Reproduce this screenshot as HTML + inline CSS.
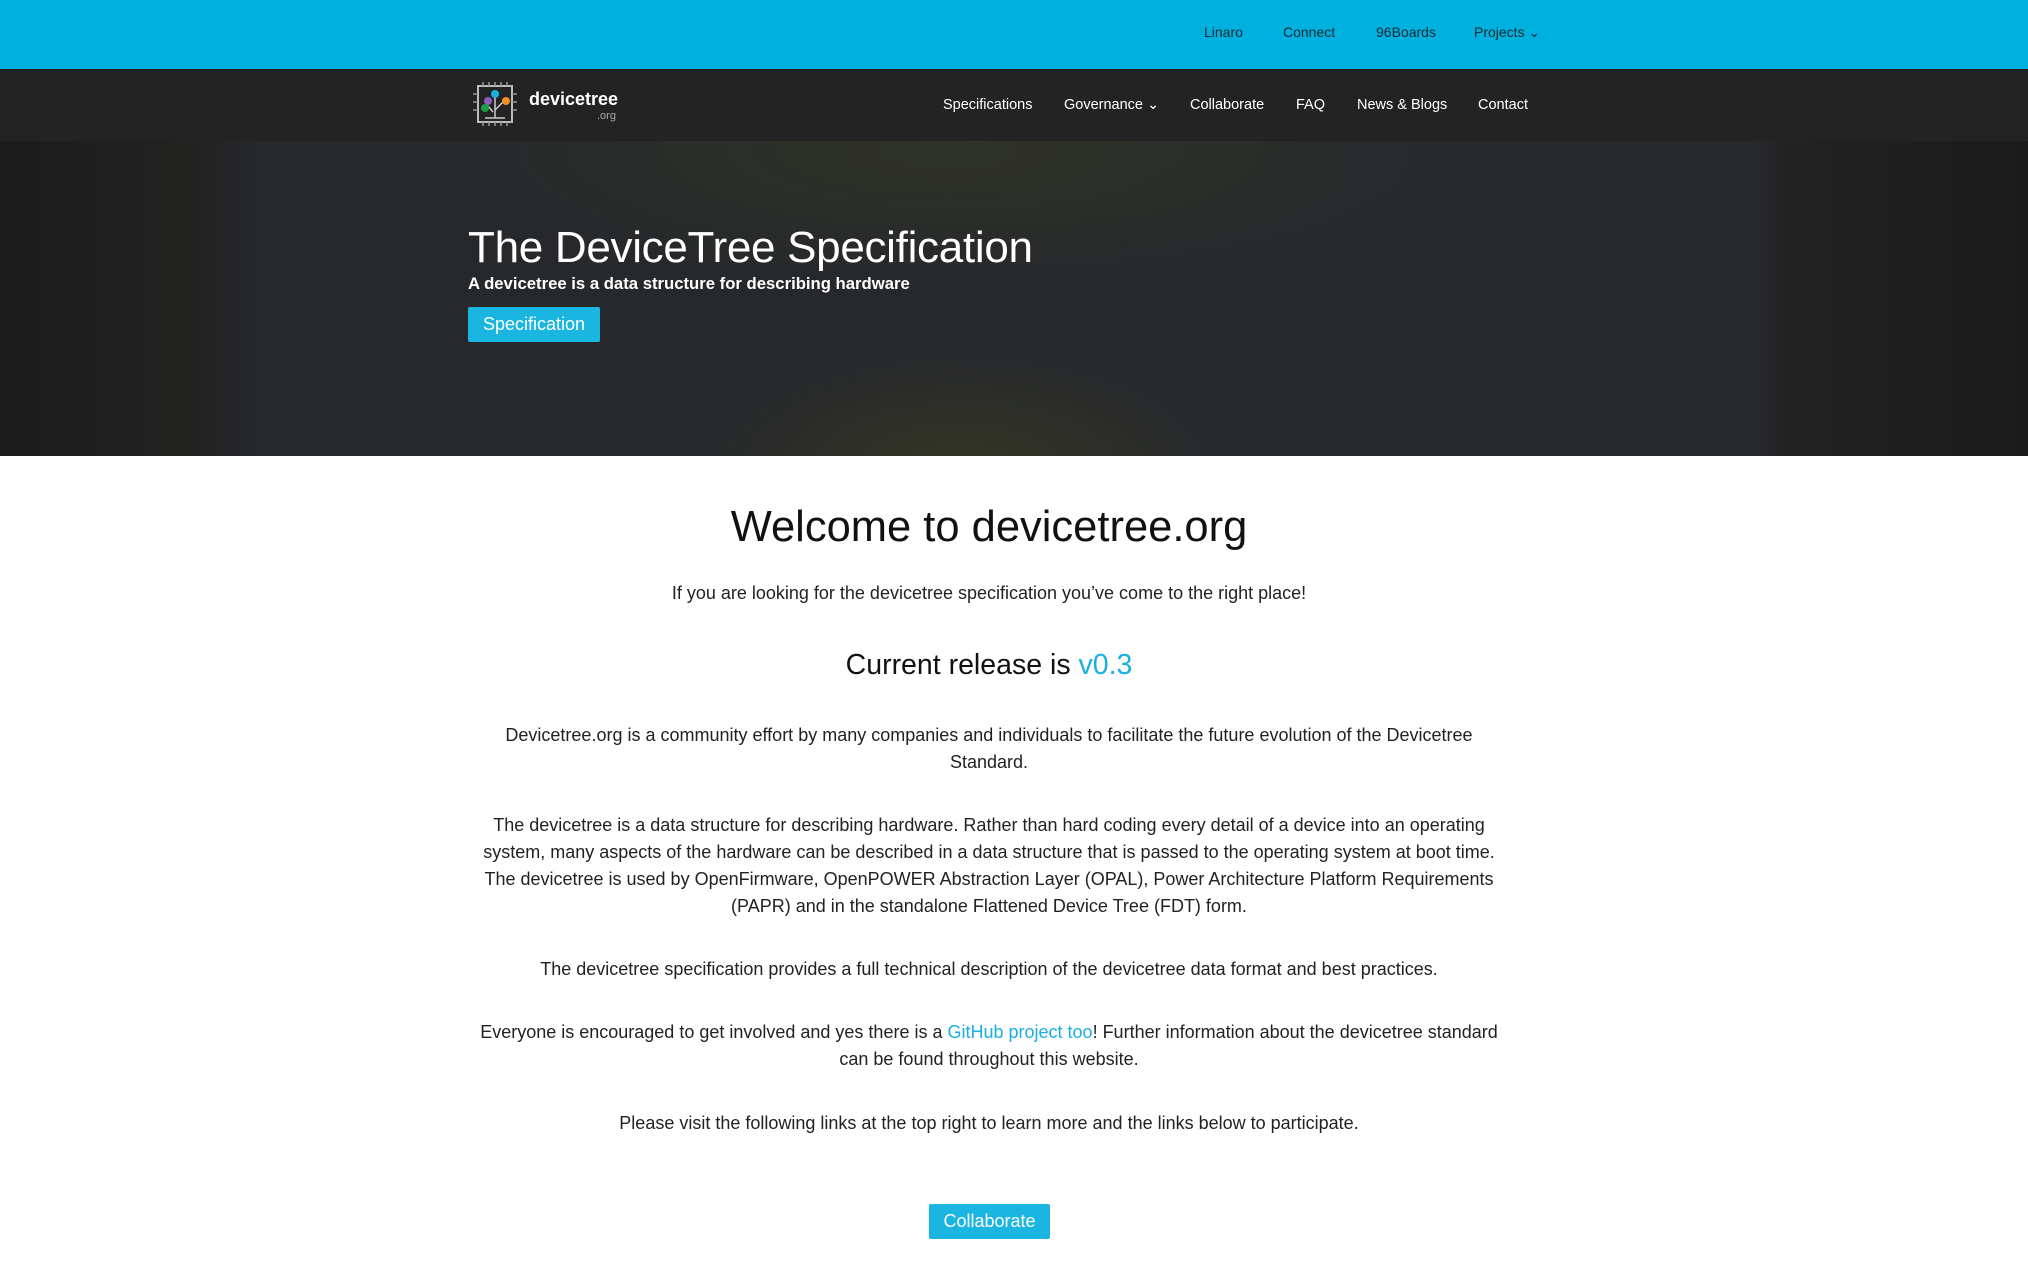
<!DOCTYPE html>
<html><head><meta charset="utf-8"><style>
*{margin:0;padding:0;box-sizing:border-box}
body{width:2028px;height:1266px;overflow:hidden;background:#fff;font-family:"Liberation Sans",Arial,sans-serif;position:relative}
.top{position:absolute;left:0;top:0;width:2028px;height:69px;background:#00b0de}
.top a{position:absolute;top:24px;font-size:14px;color:#1d2a33;text-decoration:none}
.nav{position:absolute;left:0;top:69px;width:2028px;height:72px;background:#232323}
.nav a{position:absolute;top:28px;font-size:14.5px;color:#fff;text-decoration:none}
.hero{position:absolute;left:0;top:141px;width:2028px;height:315px;background:
radial-gradient(ellipse 260px 120px at 960px 330px,rgba(70,70,30,.45),transparent),
radial-gradient(ellipse 500px 130px at 950px 10px,rgba(55,60,35,.5),transparent),
linear-gradient(90deg,#1c1c1c 0,#232221 190px,#26282b 260px,#27292c 1750px,#222 1790px,#1b1b1b 2028px)}
.hero h1{position:absolute;left:468px;top:82px;font-size:44px;font-weight:normal;color:#fff;letter-spacing:-.3px}
.hero p{position:absolute;left:468px;top:133px;font-size:16.7px;font-weight:bold;color:#fff}
.btn{position:absolute;background:#1ab5e0;color:#fff;font-size:18px;text-align:center;border-radius:2px}
.c{position:absolute;left:468px;width:1042px;text-align:center;color:#222;font-size:18px;line-height:27px}
a.l{color:#1ab0e0;text-decoration:none}
</style></head><body>
<div class="top">
<a style="left:1204px">Linaro</a><a style="left:1283px">Connect</a><a style="left:1376px">96Boards</a><a style="left:1474px">Projects ⌄</a>
</div>
<div class="nav">
<svg style="position:absolute;left:473px;top:13px" width="46" height="44" viewBox="0 0 46 44">
<rect x="5" y="4" width="34" height="36" fill="none" stroke="#bbb" stroke-width="2"/>
<g stroke="#999" stroke-width="1.5"><line x1="10" y1="0" x2="10" y2="4"/><line x1="16" y1="0" x2="16" y2="4"/><line x1="22" y1="0" x2="22" y2="4"/><line x1="28" y1="0" x2="28" y2="4"/><line x1="34" y1="0" x2="34" y2="4"/><line x1="10" y1="40" x2="10" y2="44"/><line x1="16" y1="40" x2="16" y2="44"/><line x1="22" y1="40" x2="22" y2="44"/><line x1="28" y1="40" x2="28" y2="44"/><line x1="34" y1="40" x2="34" y2="44"/><line x1="0" y1="12" x2="5" y2="12"/><line x1="0" y1="20" x2="5" y2="20"/><line x1="0" y1="28" x2="5" y2="28"/><line x1="39" y1="12" x2="44" y2="12"/><line x1="39" y1="20" x2="44" y2="20"/><line x1="39" y1="28" x2="44" y2="28"/></g>
<path d="M22 14V36M12 36H32M22 28L30 20M20 30L15 24" stroke="#ccc" stroke-width="1.5" fill="none"/>
<circle cx="22" cy="12" r="4" fill="#1ab0e0"/><circle cx="15" cy="19" r="4" fill="#8a5fb8"/><circle cx="33" cy="19" r="4" fill="#f39220"/><circle cx="12" cy="26" r="4" fill="#1a9d4a"/>
</svg>
<div style="position:absolute;left:529px;top:20px;color:#fff;font-weight:bold;font-size:18px">devicetree</div>
<div style="position:absolute;left:597px;top:41px;color:#aaa;font-size:11px">.org</div>
<a style="left:943px">Specifications</a><a style="left:1064px">Governance ⌄</a><a style="left:1190px">Collaborate</a><a style="left:1296px">FAQ</a><a style="left:1357px">News &amp; Blogs</a><a style="left:1478px">Contact</a>
</div>
<div class="hero">
<h1>The DeviceTree Specification</h1>
<p>A devicetree is a data structure for describing hardware</p>
<div class="btn" style="left:468px;top:166px;width:132px;height:35px;line-height:35px">Specification</div>
</div>
<div class="c" style="top:499px;font-size:43.5px;line-height:56px;color:#111">Welcome to devicetree.org</div>
<div class="c" style="top:580px">If you are looking for the devicetree specification you’ve come to the right place!</div>
<div class="c" style="top:647px;font-size:28.5px;line-height:36px;color:#111">Current release is <a class="l">v0.3</a></div>
<div class="c" style="top:722px">Devicetree.org is a community effort by many companies and individuals to facilitate the future evolution of the Devicetree<br>Standard.</div>
<div class="c" style="top:812px">The devicetree is a data structure for describing hardware. Rather than hard coding every detail of a device into an operating<br>system, many aspects of the hardware can be described in a data structure that is passed to the operating system at boot time.<br>The devicetree is used by OpenFirmware, OpenPOWER Abstraction Layer (OPAL), Power Architecture Platform Requirements<br>(PAPR) and in the standalone Flattened Device Tree (FDT) form.</div>
<div class="c" style="top:956px">The devicetree specification provides a full technical description of the devicetree data format and best practices.</div>
<div class="c" style="top:1019px">Everyone is encouraged to get involved and yes there is a <a class="l">GitHub project too</a>! Further information about the devicetree standard<br>can be found throughout this website.</div>
<div class="c" style="top:1110px">Please visit the following links at the top right to learn more and the links below to participate.</div>
<div class="btn" style="left:929px;top:1204px;width:121px;height:35px;line-height:35px">Collaborate</div>
</body></html>
